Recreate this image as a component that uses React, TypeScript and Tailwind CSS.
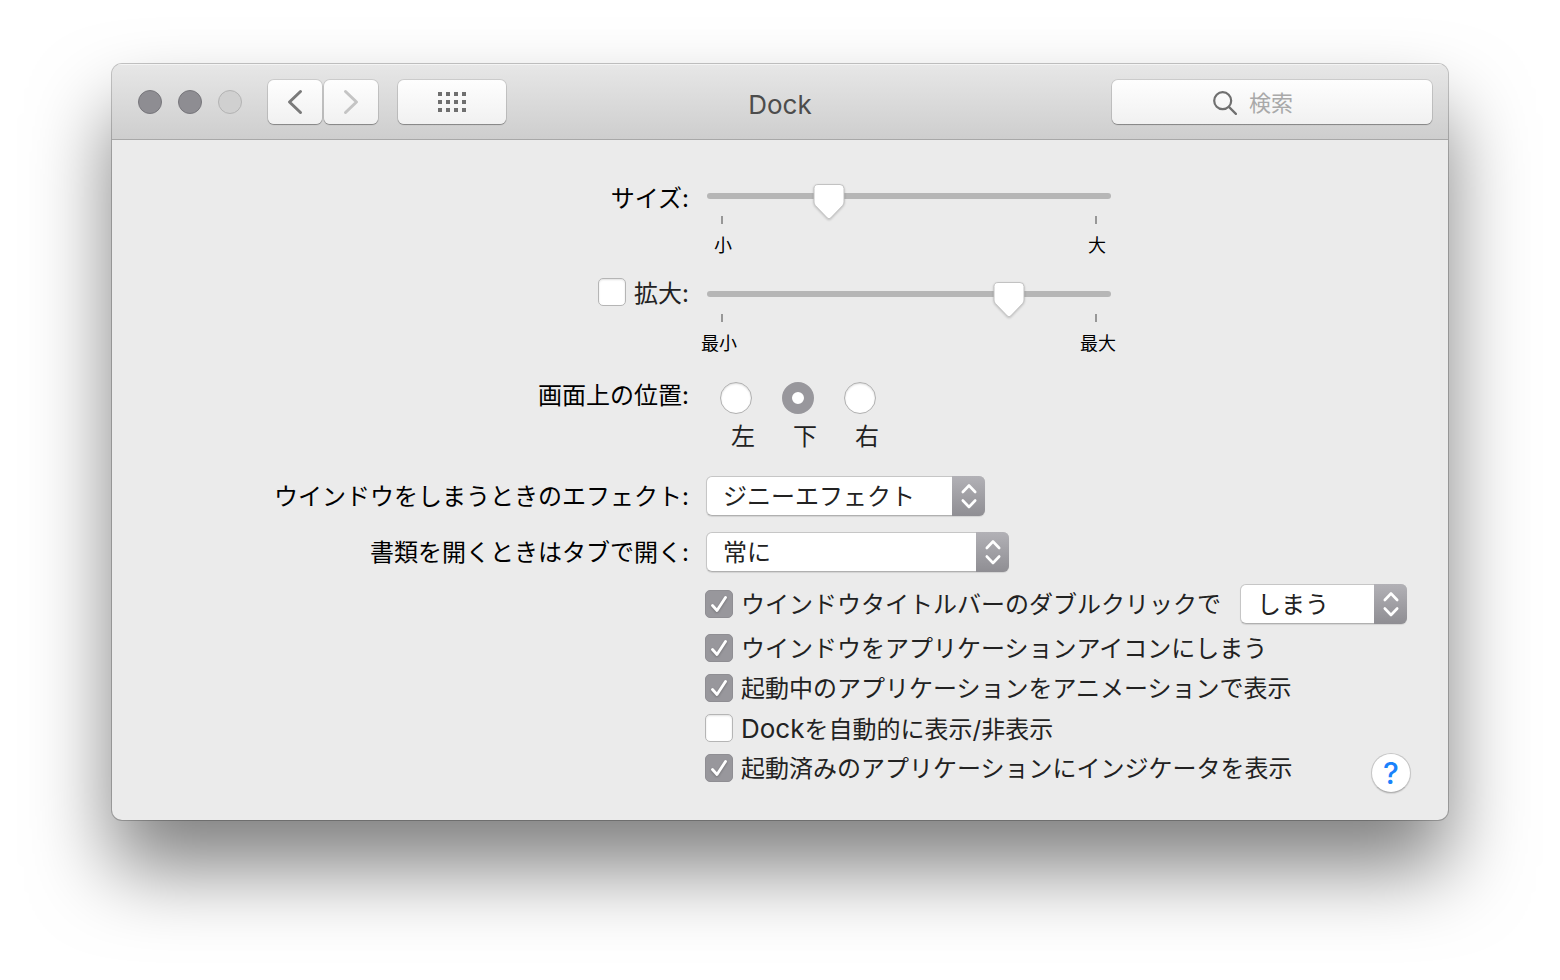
import React, { useState } from "react";

const buttonLook =
  "flex items-center justify-center rounded-md bg-gradient-to-b from-[#fefefe] to-[#f1f1f1] shadow-[0_0_0_1px_rgba(0,0,0,0.1),0_1px_1px_0_rgba(0,0,0,0.3)]";

type SliderProps = {
  id: string;
  label?: string;
  initial: number;
  min: string;
  max: string;
  captionClass: string;
};

const Slider = ({ id, label, initial, min, max, captionClass }: SliderProps) => {
  const [value, setValue] = useState(initial);

  return (
    <div className="ml-0.5 w-[404px] pt-1">
      <div className="relative h-8 pt-[9px]">
        <div className="h-1.5 rounded-full bg-[#b6b6b6]" />
        <div className="pointer-events-none absolute inset-x-[15px] top-0">
          <svg
            className="absolute -top-0.5 -ml-[18px] h-10 w-9 drop-shadow-[0_1px_1px_rgba(0,0,0,0.2)]"
            style={{ left: `${value / 10}%` }}
            viewBox="0 0 36 40"
          >
            <path
              d="M7 2.5h22a4 4 0 0 1 4 4v13.5q0 2-1.4 3.6L19.6 36q-1.6 1.7-3.2 0L4.4 23.6Q3 22 3 20V6.500a4 4 0 0 1 4-4z"
              fill="#fff"
              stroke="#c2c2c2"
              strokeWidth="1"
            />
          </svg>
        </div>
        <input
          id={id}
          aria-label={label}
          type="range"
          min={0}
          max={1000}
          value={value}
          onChange={(e) => setValue(Number(e.target.value))}
          className="absolute inset-0 m-0 h-full w-full cursor-default opacity-0"
        />
      </div>
      <div className="flex justify-between px-3.5">
        <span className="h-2 w-0.5 bg-[#979797]" />
        <span className="h-2 w-0.5 bg-[#979797]" />
      </div>
      <div className={`mt-2 flex justify-between text-[18px] leading-7 text-black ${captionClass}`}>
        <span>{min}</span>
        <span>{max}</span>
      </div>
    </div>
  );
};

const CheckBox = ({ id, checked }: { id: string; checked?: boolean }) => (
  <span className="relative flex h-7 w-7 shrink-0">
    <input
      id={id}
      type="checkbox"
      defaultChecked={checked}
      className="peer h-7 w-7 appearance-none rounded-[5px] border border-[#b5b5b5] bg-white shadow-[inset_0_1px_2px_rgba(0,0,0,0.12)] checked:border-[#8f8e93] checked:bg-[#98979c] checked:shadow-none"
    />
    <svg
      className="pointer-events-none absolute inset-0 hidden h-7 w-7 drop-shadow-[0_1px_1px_rgba(0,0,0,0.25)] peer-checked:block"
      viewBox="0 0 28 28"
      fill="none"
      stroke="#fff"
      strokeWidth="2.8"
      strokeLinecap="round"
      strokeLinejoin="round"
    >
      <path d="M7.500 15.500L12 20.500L20.500 7.500" />
    </svg>
  </span>
);

const CheckRow = ({ id, checked, text }: { id: string; checked?: boolean; text: React.ReactNode }) => (
  <div className="flex h-10 items-center gap-2">
    <CheckBox id={id} checked={checked} />
    <label htmlFor={id} className="whitespace-nowrap pt-0.5 text-[#222]">
      {text}
    </label>
  </div>
);

type PopUpProps = { id: string; label?: string; options: string[]; widthClass: string };

const PopUp = ({ id, label, options, widthClass }: PopUpProps) => (
  <span
    className={`relative ml-px flex h-10 shrink-0 rounded-md border border-[#c6c6c6] border-b-[#b0b0b0] bg-white shadow-[0_1px_1px_rgba(0,0,0,0.1)] ${widthClass}`}
  >
    <select
      id={id}
      aria-label={label}
      className="w-full appearance-none bg-transparent pl-4 pr-9 pt-0.5 text-[#222] outline-none"
    >
      {options.map((o) => (
        <option key={o}>{o}</option>
      ))}
    </select>
    <span className="pointer-events-none absolute -inset-y-px -right-px flex w-[33px] items-center justify-center rounded-r-md bg-gradient-to-b from-[#b2b1b6] to-[#8f8e93]">
      <svg
        className="h-7 w-5"
        viewBox="0 0 20 28"
        fill="none"
        stroke="#fff"
        strokeWidth="2.6"
        strokeLinecap="round"
        strokeLinejoin="round"
      >
        <path d="M3.800 10L10 3.500L16.200 10M3.800 18.500L10 25L16.200 18.500" />
      </svg>
    </span>
  </span>
);

const positions = [
  { id: "left", text: "左" },
  { id: "bottom", text: "下" },
  { id: "right", text: "右" },
];

const dots = [0, 8, 16, 24].flatMap((x) => [0, 8, 16].map((y) => ({ x, y })));

const TitleBar = () => (
  <header className="grid grid-cols-[1fr_auto_1fr] items-center border-b border-[#a8a8a8] bg-gradient-to-b from-[#e7e7e7] to-[#cecece] px-4 pb-[15px] pt-4 shadow-[inset_0_1px_0_#f4f4f4]">
    <div className="flex items-center pl-2.5">
      <div className="mr-[26px] flex gap-4">
        <button aria-label="閉じる" className="h-6 w-6 rounded-full border border-[#77767b] bg-[#8e8d92]" />
        <button aria-label="しまう" className="h-6 w-6 rounded-full border border-[#77767b] bg-[#8e8d92]" />
        <button
          aria-label="拡大/縮小"
          disabled
          className="h-6 w-6 rounded-full border border-[#b3b3b3] bg-[#d0d0d0]"
        />
      </div>
      <div className="mr-5 flex gap-0.5">
        <button aria-label="戻る" className={`h-11 w-[54px] ${buttonLook}`}>
          <svg className="h-7 w-5" viewBox="0 0 20 28" fill="none" stroke="#7a7a7a" strokeWidth="3" strokeLinecap="round" strokeLinejoin="round">
            <path d="M15.500 3.500L4.500 14L15.500 24.500" />
          </svg>
        </button>
        <button aria-label="進む" disabled className={`h-11 w-[54px] ${buttonLook}`}>
          <svg className="h-7 w-5" viewBox="0 0 20 28" fill="none" stroke="#c4c4c4" strokeWidth="3" strokeLinecap="round" strokeLinejoin="round">
            <path d="M4.500 3.500L15.500 14L4.500 24.500" />
          </svg>
        </button>
      </div>
      <button aria-label="すべてを表示" className={`h-11 w-[108px] ${buttonLook}`}>
        <svg className="h-5 w-7" viewBox="0 0 28 20" fill="#6f6f6f">
          {dots.map((d) => (
            <rect key={`${d.x}-${d.y}`} x={d.x} y={d.y} width="4" height="4" />
          ))}
        </svg>
      </button>
    </div>
    <h1 className="pt-1.5 text-[26px] leading-8 text-[#4c4c4c]">Dock</h1>
    <div className={`ml-auto h-11 w-80 gap-3 ${buttonLook}`}>
      <svg className="mt-0.5 h-6 w-6" viewBox="0 0 26 26" fill="none" stroke="#707070" strokeWidth="2.400" strokeLinecap="round">
        <circle cx="10.500" cy="10.500" r="9.200" />
        <path d="M17.200 17.200L24.800 24.800" />
      </svg>
      <input
        type="search"
        aria-label="検索"
        placeholder="検索"
        className="w-[82px] bg-transparent pt-0.5 text-[22px] leading-8 text-[#222] outline-none placeholder:text-[#a9a9a9]"
      />
    </div>
  </header>
);

const App = () => {
  return (
    <div className="min-h-screen bg-white px-28 py-16 font-['Inter','Noto_Sans_CJK_JP',sans-serif] text-[24px] leading-9">
      <main className="overflow-hidden rounded-[10px] bg-[#ebebeb] shadow-[0_0_0_1px_rgba(0,0,0,0.22),0_48px_80px_rgba(0,0,0,0.5)]">
        <TitleBar />
        <form
          className="grid grid-cols-[577fr_743fr] gap-x-4 pb-[27px] pt-10"
          onSubmit={(e) => e.preventDefault()}
        >
          <label htmlFor="size" className="pt-px text-right text-black">
            サイズ:
          </label>
          <div className="h-[98px]">
            <Slider id="size" initial={286} min="小" max="大" captionClass="pl-[7px] pr-[5px]" />
          </div>

          <div className="flex h-7 items-center justify-end gap-2">
            <CheckBox id="magnify" />
            <label htmlFor="magnify" className="pt-1 text-[#222]">
              拡大:
            </label>
          </div>
          <div className="h-[98px]">
            <Slider id="magnification" label="拡大" initial={767} min="最小" max="最大" captionClass="-ml-1.5 -mr-[5px]" />
          </div>

          <span id="position" className="pt-0.5 text-right text-black">
            画面上の位置:
          </span>
          <div role="radiogroup" aria-labelledby="position" className="flex h-[100px] gap-[30px] pl-[15px] pt-1.5">
            {positions.map((p) => (
              <div key={p.id} className="w-8">
                <input
                  id={p.id}
                  type="radio"
                  name="position"
                  defaultChecked={p.id === "bottom"}
                  className="block h-8 w-8 appearance-none rounded-full border border-[#b0b0b0] bg-white shadow-[inset_0_1px_2px_rgba(0,0,0,0.15)] checked:border-[10px] checked:border-[#98979c] checked:shadow-none"
                />
                <label htmlFor={p.id} className="mt-[5px] block pl-[11px] text-[#222]">
                  {p.text}
                </label>
              </div>
            ))}
          </div>

          <label htmlFor="effect" className="whitespace-nowrap pt-[3px] text-right text-black">
            ウインドウをしまうときのエフェクト:
          </label>
          <div className="flex h-14">
            <PopUp id="effect" options={["ジニーエフェクト", "スケールエフェクト"]} widthClass="w-[279px]" />
          </div>

          <label htmlFor="tabs" className="whitespace-nowrap pt-[3px] text-right text-black">
            書類を開くときはタブで開く:
          </label>
          <div className="flex h-[52px]">
            <PopUp id="tabs" options={["常に", "フルスクリーン時のみ", "手動"]} widthClass="w-[303px]" />
          </div>

          <div className="col-start-2">
            <div className="mb-1 flex gap-[18px]">
              <CheckRow id="double-click" checked text="ウインドウタイトルバーのダブルクリックで" />
              <PopUp id="action" label="ダブルクリックの動作" options={["しまう", "拡大/縮小"]} widthClass="w-[167px]" />
            </div>
            <CheckRow id="minimize" checked text="ウインドウをアプリケーションアイコンにしまう" />
            <CheckRow id="animate" checked text="起動中のアプリケーションをアニメーションで表示" />
            <CheckRow
              id="autohide"
              text={
                <>
                  <span className="text-[26px]">Dock</span>を自動的に表示/非表示
                </>
              }
            />
            <div className="flex items-start justify-between pr-[37px]">
              <CheckRow id="indicator" checked text="起動済みのアプリケーションにインジケータを表示" />
              <button
                type="button"
                aria-label="ヘルプ"
                className="mt-[5px] h-10 w-10 shrink-0 rounded-full border border-[#c6c6c6] border-b-[#b0b0b0] bg-white text-[30px] font-medium leading-9 text-[#1a82fb] shadow-[0_1px_1px_rgba(0,0,0,0.1)]"
              >
                ?
              </button>
            </div>
          </div>
        </form>
      </main>
    </div>
  );
};

export default App;
